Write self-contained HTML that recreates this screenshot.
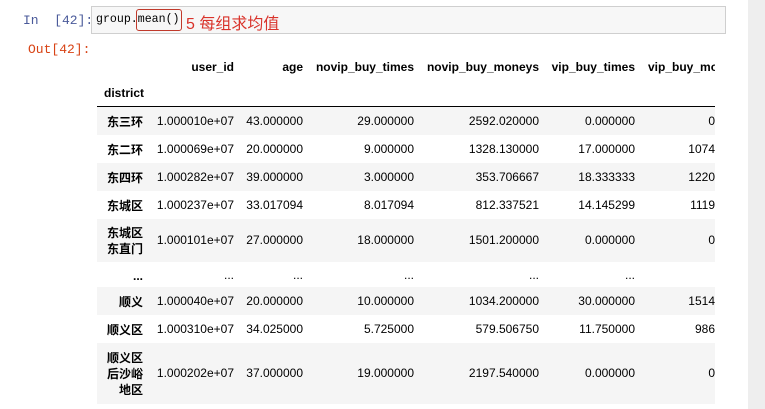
<!DOCTYPE html>
<html><head><meta charset="utf-8"><style>
body{margin:0;width:765px;height:409px;background:#fff;position:relative;overflow:hidden;font-family:"Liberation Sans","Noto Sans CJK SC",sans-serif;}
.sb{position:absolute;left:748px;top:0;width:17px;height:409px;background:#eeeeee;}
.pr{position:absolute;font-family:"Liberation Mono",monospace;font-size:13px;}
.in{left:23px;top:13px;color:#4a5a9a;}
.out{left:28px;top:42px;color:#d84315;}
.box{position:absolute;left:91px;top:6px;width:635px;height:28px;background:#f7f7f7;border:1px solid #cfcfcf;box-sizing:border-box;}
.code{position:absolute;left:96px;top:13px;font-family:"Liberation Mono",monospace;font-size:11.6px;color:#000;}
.red{position:absolute;left:136px;top:9px;width:46px;height:22px;border:1px solid #c0392b;border-radius:3px;box-sizing:border-box;}
.ann{position:absolute;left:186px;top:10px;font-size:16px;color:#d9332b;font-family:"Liberation Sans","Noto Sans CJK SC",sans-serif;}
.row{position:absolute;left:97px;width:618px;}
.g{background:#f5f5f5;}
.c{position:absolute;font-size:12px;color:#000;text-align:right;white-space:nowrap;line-height:15px;}
.h{font-weight:bold;}
.line{position:absolute;left:97px;top:106px;width:618px;height:1px;background:#000;}
.clip{position:absolute;left:0;top:0;width:715px;height:409px;overflow:hidden;}
</style></head><body>
<div class="sb"></div>
<div class="pr in">In&nbsp;&nbsp;[42]:</div>
<div class="box"></div>
<div class="code">group.mean()</div>
<div class="red"></div>
<div class="ann">5 每组求均值</div>
<div class="pr out">Out[42]:</div>
<div class="clip">
<div class="c h" style="right:481px;top:60px">user_id</div>
<div class="c h" style="right:412px;top:60px">age</div>
<div class="c h" style="right:301px;top:60px">novip_buy_times</div>
<div class="c h" style="right:176px;top:60px">novip_buy_moneys</div>
<div class="c h" style="right:80px;top:60px">vip_buy_times</div>
<div class="c h" style="left:648px;top:60px">vip_buy_moneys</div>
<div class="c h" style="left:104px;top:86px">district</div>
<div class="line"></div>

<div class="row g" style="top:107px;height:28px"></div>
<div class="row" style="top:135px;height:28px"></div>
<div class="row g" style="top:163px;height:28px"></div>
<div class="row" style="top:191px;height:28px"></div>
<div class="row g" style="top:219px;height:43px"></div>
<div class="row" style="top:262px;height:25px"></div>
<div class="row g" style="top:287px;height:28px"></div>
<div class="row" style="top:315px;height:28px"></div>
<div class="row g" style="top:343px;height:61px"></div>
</div>
<div class="clip" id="cells"></div>
<script>
var rows=[
[114,["东三环"],"1.000010e+07","43.000000","29.000000","2592.020000","0.000000","0"],
[142,["东二环"],"1.000069e+07","20.000000","9.000000","1328.130000","17.000000","1074"],
[170,["东四环"],"1.000282e+07","39.000000","3.000000","353.706667","18.333333","1220"],
[198,["东城区"],"1.000237e+07","33.017094","8.017094","812.337521","14.145299","1119"],
[233,["东城区","东直门"],"1.000101e+07","27.000000","18.000000","1501.200000","0.000000","0"],
[268,["..."],"...","...","...","...","...",""],
[294,["顺义"],"1.000040e+07","20.000000","10.000000","1034.200000","30.000000","1514"],
[322,["顺义区"],"1.000310e+07","34.025000","5.725000","579.506750","11.750000","986"],
[366,["顺义区","后沙峪","地区"],"1.000202e+07","37.000000","19.000000","2197.540000","0.000000","0"]];
var rights=[481,412,301,176,80,0];
var h="";
rows.forEach(function(r){
 var n=r[1].length, top=r[0]-(n-1)*8;
 h+='<div class="c h" style="right:572px;top:'+top+'px;line-height:16px">'+r[1].join("<br>")+'</div>';
 for(var i=0;i<6;i++){h+='<div class="c" style="right:'+rights[i]+'px;top:'+r[0]+'px">'+r[2+i]+'</div>';}
});
document.getElementById("cells").innerHTML=h;
</script>
</body></html>
